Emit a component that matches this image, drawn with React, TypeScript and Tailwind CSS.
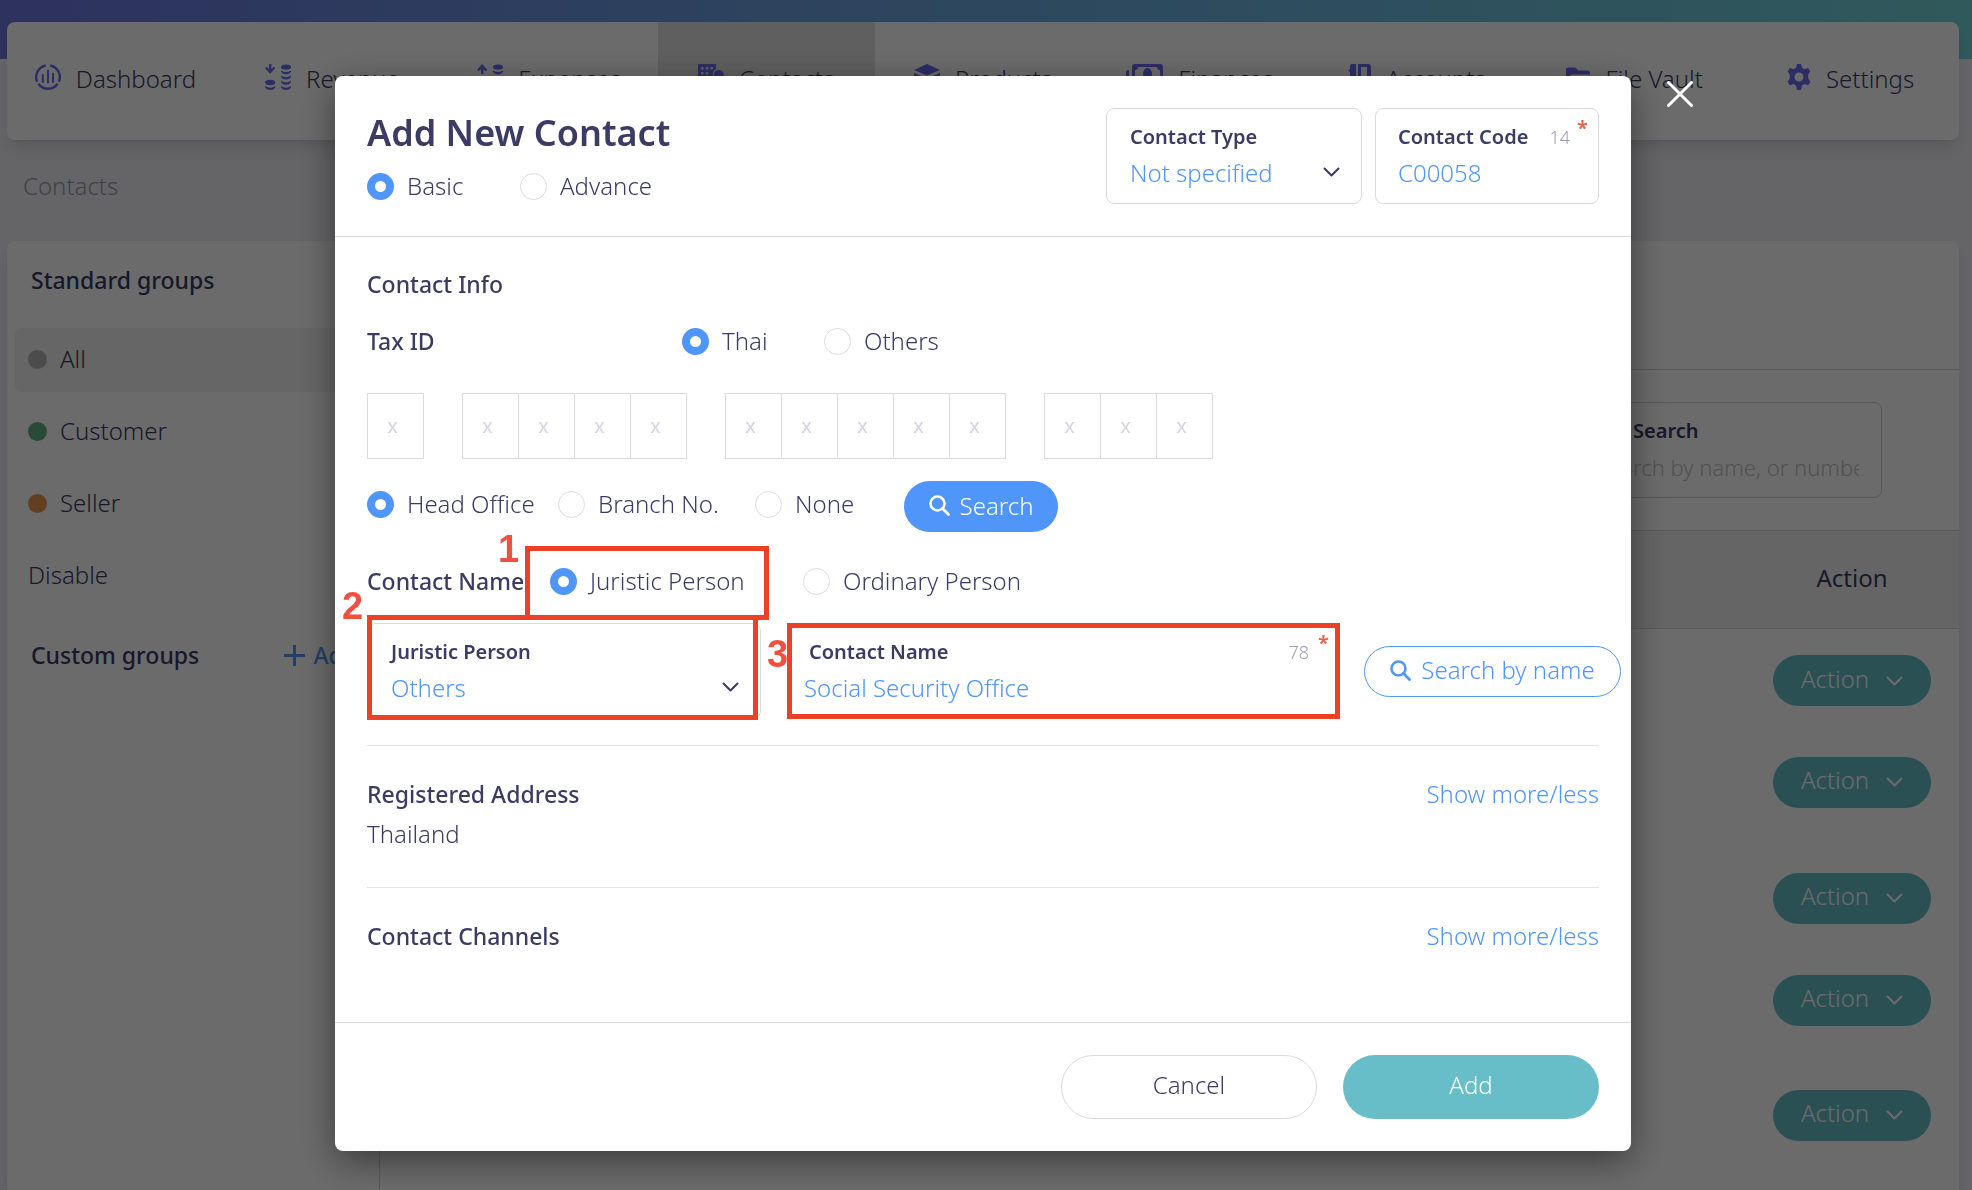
import { ReactNode, useState } from 'react';

type IconProps = { children: ReactNode; viewBox?: string; className?: string };

function Icon({ children, viewBox = '0 0 26 26', className = 'h-[26px] w-[26px]' }: IconProps) {
  return (
    <svg viewBox={viewBox} className={`shrink-0 ${className}`} fill="currentColor" aria-hidden="true">
      {children}
    </svg>
  );
}

const COIN = 'a5 2.6 0 0 1 10 0a5 2.6 0 0 1-10 0z';
const COIN_EDGE = 'q5 3.4 10 0v1.4q-1.4 2.6-5 2.6t-5-2.6z';

const navItems = [
  {
    name: 'Dashboard',
    icon: (
      <Icon>
        <g fill="none" stroke="currentColor" strokeWidth="2.4">
          <path d="M10.8 1.5A11.7 11.7 0 0 0 2.2 17.8M15.2 1.5a11.7 11.7 0 0 1 8.6 16.3M3.4 19.8a11.7 11.7 0 0 0 19.2 0" />
          <path d="M7.8 11v7M13 6.5v12M18 9.5v8.5" strokeWidth="2" strokeLinecap="round" />
        </g>
      </Icon>
    ),
  },
  {
    name: 'Revenue',
    icon: (
      <Icon>
        <path d="M4 0h2.4v5l2.4-2.3 1.5 1.6L5.2 9.8 0 4.3l1.6-1.6L4 5z" />
        <path d={`M.2 18.4${COIN}M.2 22${COIN_EDGE}M16 3${COIN}M16 6.4${COIN_EDGE}M16 11.6${COIN_EDGE}M16 16.8${COIN_EDGE}M16 22${COIN_EDGE}`} />
      </Icon>
    ),
  },
  {
    name: 'Expenses',
    icon: (
      <Icon>
        <path d="M4 10h2.4V5l2.4 2.3 1.5-1.6L5.2 0 0 5.7l1.6 1.6L4 5z" />
        <path d={`M.2 18.4${COIN}M.2 22${COIN_EDGE}M16 3${COIN}M16 6.4${COIN_EDGE}M16 11.6${COIN_EDGE}M16 16.8${COIN_EDGE}M16 22${COIN_EDGE}`} />
      </Icon>
    ),
  },
  {
    name: 'Contacts',
    active: true,
    icon: (
      <Icon>
        <path
          fillRule="evenodd"
          d="M0 0h18v5q-4 2-3 8l-3 5v8H0zM3 3v2.6h2.6V3zM7.7 3v2.6h2.6V3zM12.5 3v2.6H15V3zM3 8v2.6h2.6V8zM7.7 8v2.6h2.6V8z"
        />
        <circle cx="20.8" cy="11" r="5" />
        <path d="M14 26v-3q0-5 7-5t5 5v3z" />
      </Icon>
    ),
  },
  {
    name: 'Products',
    icon: (
      <Icon>
        <path d="M13 0l13 6-13 5.4L0 6zM0 8.8l13 5.6 13-5.6v4.4l-13 5.6L0 13.2zM0 16l13 5.6L26 16v4.4L13 26 0 20.4z" />
      </Icon>
    ),
  },
  {
    name: 'Finances',
    icon: (
      <Icon viewBox="0 0 37 26" className="h-[26px] w-[37px]">
        <path
          fillRule="evenodd"
          d="M9 0h25a3 3 0 0 1 3 3v14a3 3 0 0 1-3 3H9a3 3 0 0 1-3-3V3a3 3 0 0 1 3-3zm3 3q0 3-3 3v8q3 0 3 3h19q0-3 3-3V6q-3 0-3-3z"
        />
        <ellipse cx="21.5" cy="10" rx="4.5" ry="6" />
        <path d="M3 6v17h28v3H3a3 3 0 0 1-3-3V8q0-2 3-2z" />
      </Icon>
    ),
  },
  {
    name: 'Accounts',
    icon: (
      <Icon viewBox="0 0 23 26" className="h-[26px] w-[23px]">
        <path
          fillRule="evenodd"
          d="M4 0h4v26H4a2 2 0 0 1-2-2V8L0 6.5 2 5V2a2 2 0 0 1 2-2zM10 0h10a3 3 0 0 1 3 3v20a3 3 0 0 1-3 3H10zm3 3v20h6V3z"
        />
      </Icon>
    ),
  },
  {
    name: 'File Vault',
    icon: (
      <Icon>
        <path d="M1 5.5a2 2 0 0 1 2-2h7l3.5 3H22a3 3 0 0 1 3 3v1H8q-3 0-4 3l-3 6z" />
        <path d="M8.5 12H26l-4 10H3z" />
      </Icon>
    ),
  },
  {
    name: 'Settings',
    icon: (
      <Icon viewBox="0 0 24 26" className="h-[26px] w-6">
        <path
          fillRule="evenodd"
          d="M10 0h4l1 3.8 2.4 1.4 3.8-1.3 2 3.5-2 3.1v3.8l2.2 3.4-2.1 3.6-3.9-1.2-2.4 1.5-1 4.4h-4l-1-4.4-2.4-1.5-3.9 1.2L.6 17.7l2.2-3.4v-3.8L.7 7.4l2-3.5 3.8 1.3L9 3.8zM12 8.5a4.5 4.5 0 1 0 0 9 4.500 4.500 0 0 0 0-9z"
        />
      </Icon>
    ),
  },
];

const groups = [
  { name: 'All', dot: 'bg-[#b5b5b5]', row: 'bg-[#f2f2f2]' },
  { name: 'Customer', dot: 'bg-[#60b080]', row: '' },
  { name: 'Seller', dot: 'bg-[#ec9652]', row: '' },
];

const tableRows = ['h-[102px]', 'h-[116px]', 'h-[102px]', 'h-[115px]', 'h-[102px]'];

const taxIdGroups = [1, 4, 5, 3];

function Chevron({ className = '' }: { className?: string }) {
  return (
    <svg viewBox="0 0 17 10" className={`h-[10px] w-[17px] shrink-0 ${className}`} fill="none" aria-hidden="true">
      <path d="M1.5 1.5l7 7 7-7" stroke="currentColor" strokeWidth="2" strokeLinecap="round" strokeLinejoin="round" />
    </svg>
  );
}

function SearchIcon() {
  return (
    <svg viewBox="0 0 21 21" className="h-[21px] w-[21px] shrink-0" fill="none" aria-hidden="true">
      <circle cx="8.5" cy="8.5" r="7" stroke="currentColor" strokeWidth="2.6" />
      <path d="M13.5 13.5l6 6" stroke="currentColor" strokeWidth="2.8" strokeLinecap="round" />
    </svg>
  );
}

type RadioProps = { name: string; label: string; defaultChecked?: boolean; className?: string };

function Radio({ name, label, defaultChecked, className = '' }: RadioProps) {
  return (
    <label className={`flex h-7 shrink-0 items-center gap-[13px] whitespace-nowrap ${className}`}>
      <input
        type="radio"
        name={name}
        defaultChecked={defaultChecked}
        className="h-[27px] w-[27px] shrink-0 appearance-none rounded-full border border-[#dadae6] bg-white checked:border-8 checked:border-[#5096fa]"
      />
      {label}
    </label>
  );
}

type SelectFieldProps = { id: string; label: string; options: string[]; className: string };

function SelectField({ id, label, options, className }: SelectFieldProps) {
  return (
    <div className={`relative flex h-24 flex-col rounded-lg border border-[#dadae6] px-[23px] pt-[14px] ${className}`}>
      <label htmlFor={id} className="text-xl leading-7 font-semibold">
        {label}
      </label>
      <select id={id} className="mt-1 h-9 w-full appearance-none bg-transparent text-2xl leading-9 font-light text-[#5096fa] outline-none">
        {options.map((option) => (
          <option key={option}>{option}</option>
        ))}
      </select>
      <Chevron className="pointer-events-none absolute right-[21px] bottom-[26px]" />
    </div>
  );
}

type TextFieldProps = { id: string; label: string; value: string; left: number; className: string; labelClassName?: string };

function TextField({ id, label, value, left, className, labelClassName = '' }: TextFieldProps) {
  const [text, setText] = useState(value);

  return (
    <div className={`relative flex h-24 flex-col rounded-lg border border-[#dadae6] pt-[14px] ${className}`}>
      <div className="flex items-center justify-between pr-2">
        <label htmlFor={id} className={`text-xl leading-7 font-semibold ${labelClassName}`}>
          {label}
        </label>
        <span className="text-lg leading-7 text-[#9d9db2]">{left}</span>
      </div>
      <input
        id={id}
        value={text}
        onChange={(e) => setText(e.target.value)}
        className="mt-1 h-9 w-full bg-transparent text-2xl leading-9 font-light text-[#5096fa] outline-none"
      />
      <span className="absolute top-[7px] right-[10px] text-xl leading-6 font-semibold text-[#ec6040]">*</span>
    </div>
  );
}

function NavBar() {
  return (
    <nav className="flex h-[118px] overflow-hidden rounded-lg bg-white shadow-lg">
      {navItems.map((item) => (
        <a
          key={item.name}
          href="#"
          className={`flex flex-1 items-center justify-center gap-[15px] pb-1 whitespace-nowrap ${item.active ? 'bg-[#e2e2e2]' : ''}`}
        >
          <span className="pb-1 text-[#6b6bf0]">{item.icon}</span>
          {item.name}
        </a>
      ))}
    </nav>
  );
}

function Sidebar() {
  return (
    <aside className="w-[373px] shrink-0 border-r border-[#d4d4d4] px-2">
      <h2 className="px-4 pt-[25px] pb-[34px] text-[23px] leading-7 font-medium">Standard groups</h2>
      <ul>
        {groups.map((group) => (
          <li key={group.name} className={`mb-2 flex h-16 items-center gap-[13px] rounded-md px-[13px] pb-[2px] ${group.row}`}>
            <span className={`h-[19px] w-[19px] rounded-full ${group.dot}`} />
            {group.name}
          </li>
        ))}
        <li className="flex h-16 items-center px-[13px] pb-[2px]">Disable</li>
      </ul>
      <div className="mt-[33px] flex items-center justify-between pr-[14px] pl-4 text-[23px] leading-7 font-medium">
        <h2>Custom groups</h2>
        <button type="button" className="flex items-center gap-2 text-[#5096fa]">
          <Icon viewBox="0 0 21 21" className="h-[21px] w-[21px]">
            <path d="M9 0h3v9h9v3h-9v9H9v-9H0V9h9z" />
          </Icon>
          Add
        </button>
      </div>
    </aside>
  );
}

function ContactList() {
  return (
    <section className="flex-1">
      <div className="h-[129px] border-b border-[#d4d4d4]" />
      <div className="flex h-40 items-start justify-end pt-8 pr-[77px]">
        <div className="flex h-24 w-[308px] flex-col rounded-lg border border-[#d0d0d0] px-[22px] pt-[14px]">
          <label htmlFor="list-search" className="pl-9 text-xl leading-7 font-semibold">
            Search
          </label>
          <input
            id="list-search"
            placeholder="Search by name, or number"
            className="h-11 w-full bg-transparent text-[22px] outline-none placeholder:text-[#c2c2c8]"
          />
        </div>
      </div>
      <table className="w-full table-fixed">
        <colgroup>
          <col />
          <col className="w-[214px]" />
        </colgroup>
        <thead>
          <tr className="h-[98px] border-y border-[#d4d4d4] bg-[#f1f1f1]">
            <td />
            <th className="pb-1 font-normal">Action</th>
          </tr>
        </thead>
        <tbody>
          {tableRows.map((height, index) => (
            <tr key={index} className={height}>
              <td />
              <td className="pt-[26px] align-top">
                <button
                  type="button"
                  className="mx-auto flex h-[51px] w-[158px] items-center justify-center gap-[17px] rounded-full bg-[#67bec9] pb-1 text-white"
                >
                  Action
                  <Chevron className="mt-1" />
                </button>
              </td>
            </tr>
          ))}
        </tbody>
      </table>
    </section>
  );
}

function AddContactModal() {
  return (
    <div
      role="dialog"
      aria-labelledby="modal-title"
      className="relative w-full max-w-[1296px] rounded-lg bg-white shadow-[0_10px_36px_rgba(0,0,0,0.45)]"
    >
      <button type="button" aria-label="Close" className="absolute top-[5px] left-full ml-9 text-white">
        <svg viewBox="0 0 26 26" className="h-[26px] w-[26px]" fill="none" aria-hidden="true">
          <path d="M1.5 1.5l23 23M24.5 1.5l-23 23" stroke="currentColor" strokeWidth="3" strokeLinecap="round" />
        </svg>
      </button>

      <header className="flex h-[161px] items-start justify-between border-b border-[#dadae6] px-8 pt-8">
        <div>
          <h1 id="modal-title" className="text-4xl leading-[50px] font-semibold">
            Add New Contact
          </h1>
          <div className="mt-[14px] flex">
            <Radio name="mode" label="Basic" defaultChecked className="w-[153px]" />
            <Radio name="mode" label="Advance" />
          </div>
        </div>
        <div className="flex gap-[13px]">
          <SelectField id="contact-type" label="Contact Type" options={['Not specified', 'Juristic']} className="w-64" />
          <TextField id="contact-code" label="Contact Code" value="C00058" left={14} className="w-56 pr-5 pl-[22px]" />
        </div>
      </header>

      <div className="px-8">
        <section className="border-b border-[#e4e4e8] pt-[33px] pb-[26px]">
          <h2 className="text-[23px] leading-7 font-medium">Contact Info</h2>
          <div className="mt-[29px] flex items-center">
            <h3 className="w-[315px] text-[23px] leading-7 font-medium">Tax ID</h3>
            <Radio name="tax-country" label="Thai" defaultChecked className="w-[142px]" />
            <Radio name="tax-country" label="Others" />
          </div>

          <div className="mt-[38px] flex gap-[38px]">
            {taxIdGroups.map((count, group) => (
              <div key={group} className="flex border-l border-[#dadae6]">
                {Array.from({ length: count }, (_, i) => (
                  <input
                    key={i}
                    maxLength={1}
                    placeholder="x"
                    aria-label={`Tax ID group ${group + 1} digit ${i + 1}`}
                    className="h-[66px] w-14 border-y border-r border-[#dadae6] pr-[6px] pb-[2px] text-center text-xl font-normal outline-none placeholder:text-[#d4d4e0]"
                  />
                ))}
              </div>
            ))}
          </div>

          <div className="mt-[22px] flex h-[51px]">
            <div className="flex pt-[9px]">
              <Radio name="branch" label="Head Office" defaultChecked className="w-[191px]" />
              <Radio name="branch" label="Branch No." className="w-[197px]" />
              <Radio name="branch" label="None" className="w-[149px]" />
            </div>
            <button type="button" className="flex w-[154px] items-center justify-center gap-[10px] rounded-full bg-[#5096fa] pb-[2px] text-white">
              <SearchIcon />
              Search
            </button>
          </div>

          <div className="relative mt-[35px] flex items-center">
            <h3 className="w-[183px] text-[23px] leading-7 font-medium">Contact Name</h3>
            <Radio name="person" label="Juristic Person" defaultChecked className="w-[253px]" />
            <Radio name="person" label="Ordinary Person" />
            <Highlight step="1" box="-top-[21px] left-[158px] h-[74px] w-[244px]" label="-left-8 -top-[22px]" />
          </div>

          <div className="mt-7 flex items-center">
            <div className="relative">
              <SelectField id="juristic-person" label="Juristic Person" options={['Others', 'Company Limited']} className="w-[394px]" />
              <Highlight step="2" box="-top-2 left-0 h-[105px] w-[391px]" label="-left-[30px] -top-[34px]" />
            </div>
            <div className="relative ml-[26px] w-[553px] shrink-0">
              <TextField
                id="contact-name"
                label="Contact Name"
                value="Social Security Office"
                left={78}
                className="pr-[22px] pl-4"
                labelClassName="pl-[5px]"
              />
              <Highlight step="3" box="inset-0" label="-left-[25px] top-[6px]" />
            </div>
            <button
              type="button"
              className="ml-6 flex h-[51px] w-[257px] shrink-0 items-center justify-center gap-[10px] rounded-full border border-[#5096fa] pb-[2px] text-[#5096fa]"
            >
              <SearchIcon />
              Search by name
            </button>
          </div>
        </section>

        <section className="flex items-start justify-between border-b border-[#e4e4e8] pt-[34px] pb-[39px] leading-7">
          <div>
            <h2 className="text-[23px] leading-7 font-medium">Registered Address</h2>
            <p className="mt-3">Thailand</p>
          </div>
          <a href="#" className="text-[#5096fa]">
            Show more/less
          </a>
        </section>

        <section className="flex items-start justify-between pt-[34px] pb-[72px] leading-7">
          <h2 className="text-[23px] leading-7 font-medium">Contact Channels</h2>
          <a href="#" className="text-[#5096fa]">
            Show more/less
          </a>
        </section>
      </div>

      <footer className="flex justify-end gap-[26px] border-t border-[#dadae6] p-8">
        <button type="button" className="h-16 w-64 rounded-full border border-[#dadae6] pb-1">
          Cancel
        </button>
        <button type="button" className="h-16 w-64 rounded-full bg-[#67bec9] pb-1 text-white">
          Add
        </button>
      </footer>
    </div>
  );
}

// Numbered red frame drawn over a form field
function Highlight({ step, box, label }: { step: string; box: string; label: string }) {
  return (
    <div className={`pointer-events-none absolute z-10 border-[5px] border-[#ee4027] ${box}`}>
      <span className={`absolute font-['Liberation_Sans',sans-serif] text-[38px] leading-10 font-bold text-[#f0503f] ${label}`}>
        {step}
      </span>
    </div>
  );
}

export default function App() {
  return (
    <div className="font-['Noto_Sans',sans-serif] text-2xl font-light text-[#3b3b64]">
      <div className="flex h-screen flex-col overflow-hidden bg-[#f0f0f5]">
        <div className="h-[59px] shrink-0 bg-linear-to-r from-[#6b77e0] via-[#6cabe0] to-[#72d4da]" />
        <div className="-mt-[37px] flex flex-1 flex-col pr-[13px] pl-[7px]">
          <NavBar />
          <p className="h-[101px] px-4 pt-[30px] text-[#9a9aa8]">Contacts</p>
          <main className="flex flex-1 rounded-t-lg bg-white shadow-lg">
            <Sidebar />
            <ContactList />
          </main>
        </div>
      </div>

      <div className="fixed inset-0 flex items-start justify-center overflow-hidden bg-black/58 pt-[76px] pr-[6px]">
        <AddContactModal />
      </div>
    </div>
  );
}
